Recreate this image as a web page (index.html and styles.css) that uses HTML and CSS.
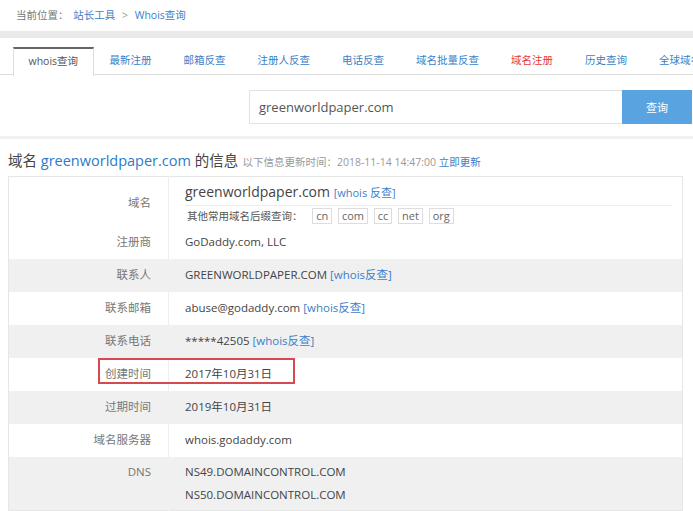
FILE: index.html
```html
<!DOCTYPE html>
<html lang="zh-CN">

<head>
    <meta charset="UTF-8">
    <meta name="viewport" content="width=device-width, initial-scale=1.0">
    <title>Whois查询</title>
    <link rel="stylesheet" href="styles.css">
</head>

<body>
    <!-- Breadcrumb -->
    <div class="crumb">
        <span class="crumb-label">当前位置：</span>
        <a href="#">站长工具</a>
        <span class="crumb-sep">&gt;</span>
        <a href="#">Whois查询</a>
    </div>
    <div class="band"></div>

    <!-- Tabs -->
    <ul class="tabs">
        <li class="tab active">whois查询</li>
        <li class="tab">最新注册</li>
        <li class="tab">邮箱反查</li>
        <li class="tab">注册人反查</li>
        <li class="tab">电话反查</li>
        <li class="tab">域名批量反查</li>
        <li class="tab hot">域名注册</li>
        <li class="tab">历史查询</li>
        <li class="tab">全球域名后缀</li>
    </ul>

    <!-- Search -->
    <div class="search">
        <div class="search-input">greenworldpaper.com</div>
        <button class="search-btn">查询</button>
    </div>
    <div class="divider"></div>

    <!-- Title -->
    <div class="info-title">
        <span class="big">域名 <a href="#" class="dm">greenworldpaper.com</a> 的信息</span>
        <span class="update">以下信息更新时间：2018-11-14 14:47:00 <a href="#">立即更新</a></span>
    </div>

    <!-- Whois table -->
    <div class="whois">
        <table>
            <tr class="row-domain">
                <td class="label">域名</td>
                <td class="value">
                    <div class="dm-main">greenworldpaper.com <a href="#" class="small-link">[whois 反查]</a></div>
                    <div class="dm-sub">
                        <span>其他常用域名后缀查询：</span>
                        <span class="tld">cn</span>
                        <span class="tld">com</span>
                        <span class="tld">cc</span>
                        <span class="tld">net</span>
                        <span class="tld">org</span>
                    </div>
                </td>
            </tr>
            <tr>
                <td class="label">注册商</td>
                <td class="value">GoDaddy.com, LLC</td>
            </tr>
            <tr class="odd">
                <td class="label">联系人</td>
                <td class="value">GREENWORLDPAPER.COM <a href="#">[whois反查]</a></td>
            </tr>
            <tr>
                <td class="label">联系邮箱</td>
                <td class="value">abuse@godaddy.com <a href="#">[whois反查]</a></td>
            </tr>
            <tr class="odd">
                <td class="label">联系电话</td>
                <td class="value">*****42505 <a href="#">[whois反查]</a></td>
            </tr>
            <tr>
                <td class="label">创建时间</td>
                <td class="value">2017年10月31日</td>
            </tr>
            <tr class="odd">
                <td class="label">过期时间</td>
                <td class="value">2019年10月31日</td>
            </tr>
            <tr>
                <td class="label">域名服务器</td>
                <td class="value">whois.godaddy.com</td>
            </tr>
            <tr class="odd row-dns">
                <td class="label">DNS</td>
                <td class="value">NS49.DOMAINCONTROL.COM<br>NS50.DOMAINCONTROL.COM</td>
            </tr>
        </table>
        <!-- annotation box -->
        <div class="mark"></div>
    </div>
</body>

</html>
```

FILE: styles.css
```css
* {
    box-sizing: border-box;
    margin: 0;
    padding: 0;
}

body {
    font-family: "Open Sans", "Noto Sans CJK SC", sans-serif;
    background-color: #fff;
    color: #444;
    width: 693px;
    height: 511px;
    overflow: hidden;
}

a {
    color: #3a7fc8;
    text-decoration: none;
}

.crumb {
    height: 31px;
    line-height: 31px;
    padding-left: 16px;
    font-size: 10.5px;
}

.crumb-label {
    color: #777;
    margin-right: 2px;
}

.crumb-sep {
    color: #999;
    margin: 0 4px;
}

.band {
    height: 7px;
    background-color: #e9e9e9;
}

.tabs {
    list-style: none;
    display: flex;
    margin-top: 9px;
    height: 28px;
    padding-left: 13px;
    border-bottom: 1px solid #ddd;
    white-space: nowrap;
}

.tab {
    padding: 0 16px;
    line-height: 27px;
    font-size: 10.5px;
    color: #3a7fc8;
}

.tab.active {
    color: #555;
    background-color: #fff;
    border: 1px solid #ddd;
    border-top: 2px solid #666;
    border-bottom: none;
    height: 29px;
    line-height: 25px;
    padding: 0 14.5px;
}

.tab.hot {
    color: #e4393c;
}

.search {
    display: flex;
    justify-content: flex-end;
    padding-right: 1px;
    margin-top: 15px;
}

.search-input {
    width: 373px;
    height: 34px;
    line-height: 32px;
    border: 1px solid #e2e2e2;
    border-right: none;
    padding-left: 9px;
    font-size: 13px;
    color: #555;
}

.search-btn {
    width: 70px;
    height: 34px;
    border: none;
    background-color: #58a3e0;
    color: #fff;
    font-family: inherit;
    font-size: 11px;
}

.divider {
    height: 3px;
    margin-top: 12px;
    background-color: #f1f1f1;
}

.info-title {
    height: 37px;
    line-height: 42px;
    padding-left: 8px;
    white-space: nowrap;
}

.info-title .big {
    font-size: 14.5px;
    color: #444;
}

.info-title .dm {
    color: #2b7bc9;
}

.info-title .update {
    font-size: 10.5px;
    color: #999;
}

.whois {
    position: relative;
    margin-left: 8px;
    width: 675px;
}

.whois table {
    width: 100%;
    border-collapse: collapse;
    border: 1px solid #e6e6e6;
    font-size: 11.5px;
}

.whois td {
    height: 33px;
    padding-bottom: 3px;
    vertical-align: middle;
}

.whois tr.odd {
    background-color: #f0f0f0;
}

.whois .label {
    width: 160px;
    text-align: right;
    padding-right: 17px;
    color: #777;
    border-right: 1px solid #eee;
}

.whois tr.odd .label {
    border-right-color: #f0f0f0;
}

.whois .value {
    padding-left: 16px;
    padding-right: 10px;
    color: #444;
}

.whois .value a {
    color: #3a7fc8;
}

.row-domain td {
    height: 49px;
    padding-bottom: 0;
}

.dm-main {
    height: 29px;
    line-height: 30px;
    font-size: 14px;
    color: #444;
    border-bottom: 1px solid #eee;
}

.dm-main .small-link {
    font-size: 11px;
}

.dm-sub {
    height: 20px;
    line-height: 20px;
    font-size: 10.5px;
    color: #555;
    padding-left: 2px;
}

.tld {
    display: inline-block;
    height: 16px;
    line-height: 14px;
    padding: 0 3px;
    border: 1px solid #ddd;
    color: #666;
    font-size: 11px;
    margin-left: 3px;
}

.dm-sub span:first-child {
    margin-right: 4px;
}

.row-dns td {
    height: 53px;
    vertical-align: top;
    padding-top: 3px;
    padding-bottom: 0;
    line-height: 23px;
}

.mark {
    position: absolute;
    left: 90px;
    top: 182px;
    width: 197px;
    height: 26px;
    border: 2px solid #d44a4f;
}
```
